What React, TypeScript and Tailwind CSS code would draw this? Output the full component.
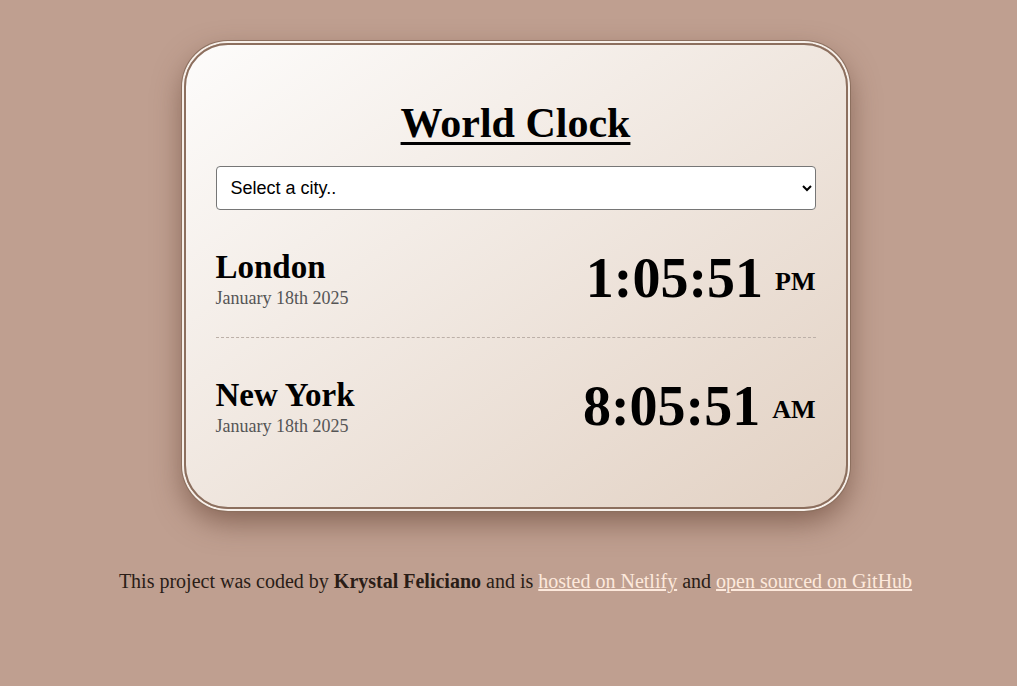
const CITIES = [
  { name: "London", date: "January 18th 2025", time: "1:05:51", ampm: "PM" },
  { name: "New York", date: "January 18th 2025", time: "8:05:51", ampm: "AM" },
];

export default function App() {
  return (
    <div className="min-h-[686px] bg-[#bf9f90] pl-[14px] pt-[43px] font-['Liberation_Serif',Georgia,serif] text-black">
      <div className="mx-auto w-[664px] rounded-[44px] border-2 border-[#8c6f5e] bg-gradient-to-br from-[#fdfcfb] to-[#e2d1c3] px-[30px] pt-[53px] pb-[42px] shadow-[0_0_0_2px_#f7f0ea,0_0_0_3px_#8c6f5e,0_12px_30px_rgba(90,55,40,0.6)]">
        <h1 className="text-center text-[42px] font-bold leading-[50px] underline decoration-[3px] underline-offset-[5px]">World Clock</h1>

        <select className="mt-[18px] block h-[44px] w-full rounded-[4px] border border-[#767676] bg-white px-[10px] font-['Liberation_Sans',Arial,sans-serif] text-[18px] text-black">
          <option>Select a city..</option>
          <option>Paris</option>
          <option>Tokyo</option>
          <option>Sydney</option>
        </select>

        <div>
          {CITIES.map((c, i) => (
            <div
              key={c.name}
              className={`flex items-center justify-between pt-[36px] pb-[27px] ${i < CITIES.length - 1 ? "border-b border-dashed border-[#bcb0a8]" : ""}`}
            >
              <div>
                <h2 className="text-[33px] font-bold leading-[40px]">{c.name}</h2>
                <div className="text-[18px] leading-[22px] text-[#555]">{c.date}</div>
              </div>
              <div className="flex items-center gap-[12px] font-bold">
                <span className="text-[56px] leading-[64px]">{c.time}</span>
                <span className="translate-y-[4px] text-[26px] leading-[30px]">{c.ampm}</span>
              </div>
            </div>
          ))}
        </div>
      </div>

      <p className="mt-[57px] text-center text-[20px] text-[#2a1d17]">
        This project was coded by <strong>Krystal Feliciano</strong> and is{" "}
        <a href="#" className="text-[#fde9dc] underline">hosted on Netlify</a> and{" "}
        <a href="#" className="text-[#fde9dc] underline">open sourced on GitHub</a>
      </p>
    </div>
  );
}
